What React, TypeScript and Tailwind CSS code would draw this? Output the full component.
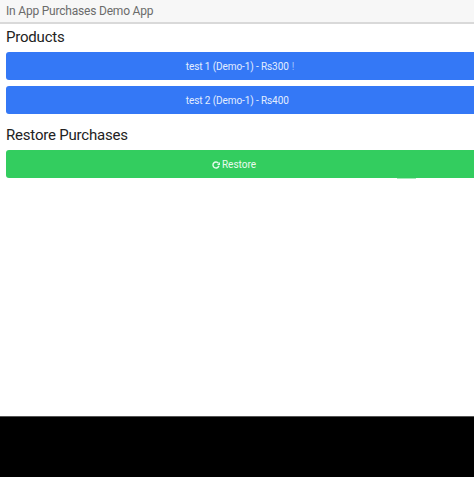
import React from 'react';

const ProductButton = ({ label, hint }: { label: string; hint?: string }) => (
  <button className="flex h-[28px] w-full items-center justify-center rounded-l-[3px] bg-[#3478f6] pt-[1px] text-[10px] tracking-[-0.1px] text-[#e3edfe]">
    {label}
    <span className={hint ? 'ml-[3px] text-[#9fc2fb]' : 'invisible ml-[3px]'}>!</span>
  </button>
);

const RestoreIcon = () => (
  <svg width="8" height="8" viewBox="0 0 8 8" fill="none" className="mr-[2px]">
    <path d="M6.4 2.2A3 3 0 1 0 6.9 4.8" stroke="#e8fbee" strokeWidth="1.4" />
    <path d="M8 1V4H5Z" fill="#e8fbee" />
  </svg>
);

export default function App() {
  return (
    <div className="flex h-[477px] w-[474px] flex-col overflow-hidden bg-white font-['Roboto',sans-serif]">
      <header className="flex h-[24px] shrink-0 items-center border-b-2 border-[#d9d9d9] bg-[#f7f7f7] pl-[6px] text-[12px] tracking-[-0.2px] text-[#6b6b6b]">
        In App Purchases Demo App
      </header>
      <main className="flex flex-1 flex-col pl-[6px]">
        <h2 className="mt-[3px] h-[21px] text-[15px] leading-[21px] tracking-[-0.2px] text-[#222222]">Products</h2>
        <div className="mt-[4px] flex flex-col gap-[6px]">
          <ProductButton label="test 1 (Demo-1) - Rs300" hint="!" />
          <ProductButton label="test 2 (Demo-1) - Rs400" />
        </div>
        <h2 className="mt-[11px] h-[21px] text-[15px] leading-[21px] tracking-[-0.2px] text-[#222222]">Restore Purchases</h2>
        <button className="relative mt-[4px] flex h-[28px] w-full items-center justify-center rounded-l-[3px] bg-[#33cd5f] pr-[12px] pt-[1px] text-[10px] text-[#e8fbee]">
          <RestoreIcon />
          Restore
          <span className="absolute left-[391px] top-full h-[1px] w-[19px] bg-[#a5e8b9]" />
        </button>
      </main>
      <footer className="h-[61px] shrink-0 border-t border-[#555555] bg-black" />
    </div>
  );
}
